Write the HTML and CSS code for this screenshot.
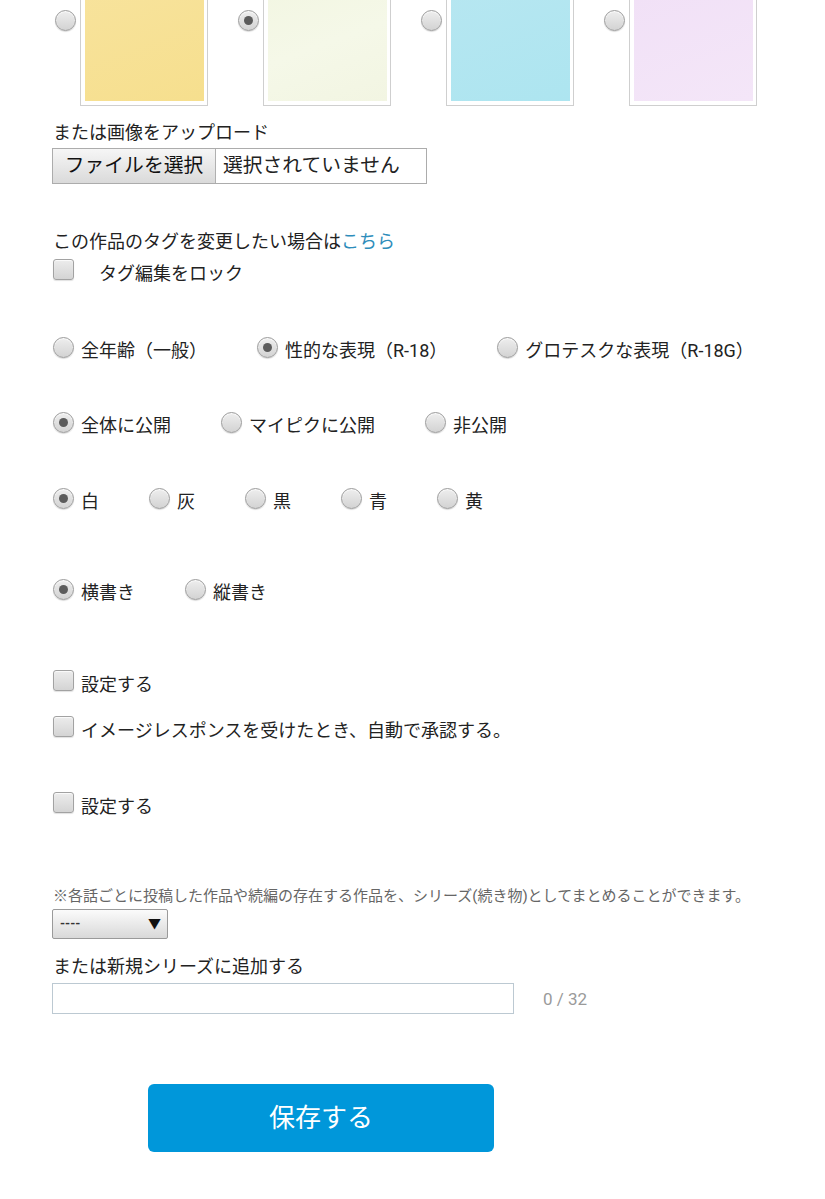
FILE: index.html
```html
<!DOCTYPE html>
<html lang="ja">
<head>
<meta charset="utf-8">
<link rel="stylesheet" href="styles.css">
</head>
<body>
<div class="page">
  <div class="thumbs">
    <div class="thumb-item"><span class="radio"></span><div class="thumb"><div class="fill fill-yellow"></div></div></div>
    <div class="thumb-item"><span class="radio on"></span><div class="thumb"><div class="fill fill-cream"></div></div></div>
    <div class="thumb-item"><span class="radio"></span><div class="thumb"><div class="fill fill-cyan"></div></div></div>
    <div class="thumb-item"><span class="radio"></span><div class="thumb"><div class="fill fill-lilac"></div></div></div>
  </div>

  <div class="line upload-label">または画像をアップロード</div>
  <div class="file-box">
    <div class="file-btn">ファイルを選択</div>
    <div class="file-status">選択されていません</div>
  </div>

  <div class="line tag-line">この作品のタグを変更したい場合は<a class="link" href="#">こちら</a></div>
  <div class="row tag-lock"><span class="check"></span><span class="label wide">タグ編集をロック</span></div>

  <div class="row radios rating">
    <div class="opt"><span class="radio"></span><span class="label">全年齢（一般）</span></div>
    <div class="opt"><span class="radio on"></span><span class="label">性的な表現（R-18）</span></div>
    <div class="opt"><span class="radio"></span><span class="label">グロテスクな表現（R-18G）</span></div>
  </div>

  <div class="row radios visibility">
    <div class="opt"><span class="radio on"></span><span class="label">全体に公開</span></div>
    <div class="opt"><span class="radio"></span><span class="label">マイピクに公開</span></div>
    <div class="opt"><span class="radio"></span><span class="label">非公開</span></div>
  </div>

  <div class="row radios colors">
    <div class="opt"><span class="radio on"></span><span class="label">白</span></div>
    <div class="opt"><span class="radio"></span><span class="label">灰</span></div>
    <div class="opt"><span class="radio"></span><span class="label">黒</span></div>
    <div class="opt"><span class="radio"></span><span class="label">青</span></div>
    <div class="opt"><span class="radio"></span><span class="label">黄</span></div>
  </div>

  <div class="row radios writing">
    <div class="opt"><span class="radio on"></span><span class="label">横書き</span></div>
    <div class="opt"><span class="radio"></span><span class="label">縦書き</span></div>
  </div>

  <div class="row cb1"><span class="check"></span><span class="label">設定する</span></div>
  <div class="row cb2"><span class="check"></span><span class="label">イメージレスポンスを受けたとき、自動で承認する。</span></div>
  <div class="row cb3"><span class="check"></span><span class="label">設定する</span></div>

  <div class="note">※各話ごとに投稿した作品や続編の存在する作品を、シリーズ(続き物)としてまとめることができます。</div>
  <div class="select"><span class="select-value">----</span><span class="select-arrow">▼</span></div>

  <div class="line series-label">または新規シリーズに追加する</div>
  <div class="series-row">
    <div class="text-input"></div>
    <span class="counter">0 / 32</span>
  </div>

  <div class="save-wrap"><div class="save-btn">保存する</div></div>
</div>
</body>
</html>
```
FILE: styles.css
```css
html, body {
  margin: 0;
  padding: 0;
  background: #ffffff;
}
body {
  font-family: Roboto, "Noto Sans CJK JP", sans-serif;
  font-size: 18px;
  line-height: 24px;
  color: #222222;
}
.page {
  display: flow-root;
  padding-left: 53px;
  padding-bottom: 40px;
}

/* thumbnails */
.thumbs {
  display: flex;
  gap: 30px;
  margin-top: -60px;
  padding-left: 2px;
}
.thumb-item {
  display: flex;
  align-items: flex-start;
  gap: 4px;
}
.thumb-item .radio {
  margin-top: 70px;
}
.thumb {
  width: 128px;
  height: 166px;
  box-sizing: border-box;
  border: 1px solid #cfcfcf;
  padding: 4px 3px 4px 4px;
  background: #ffffff;
}
.fill {
  width: 100%;
  height: 100%;
}
.fill-yellow { background: linear-gradient(160deg, #f8e4a0, #f6df8e); }
.fill-cream  { background: linear-gradient(160deg, #f1f5df, #f5f8e8 60%, #f2f5e2); }
.fill-cyan   { background: linear-gradient(160deg, #b9e7f1, #ade5f0); }
.fill-lilac  { background: linear-gradient(160deg, #f0dff6, #f4e6f8); }

/* radio & checkbox */
.radio {
  flex: none;
  width: 21px;
  height: 21px;
  box-sizing: border-box;
  border-radius: 50%;
  border: 1px solid #9c9c9c;
  background: linear-gradient(#eeeeee, #d3d3d3);
  box-shadow: inset 0 1px 1px rgba(255,255,255,0.8), 0 1px 1px rgba(0,0,0,0.15);
  display: flex;
  align-items: center;
  justify-content: center;
}
.radio.on::after {
  content: "";
  width: 9px;
  height: 9px;
  border-radius: 50%;
  background: #5b5b5b;
}
.check {
  flex: none;
  width: 21px;
  height: 21px;
  box-sizing: border-box;
  border-radius: 3px;
  border: 1px solid #a2a2a2;
  background: linear-gradient(#ececec, #d4d4d4);
  box-shadow: inset 0 1px 1px rgba(255,255,255,0.8), 0 1px 1px rgba(0,0,0,0.12);
}

.line {
  height: 24px;
  white-space: nowrap;
}
.row {
  display: flex;
  align-items: flex-start;
  height: 24px;
  white-space: nowrap;
}
.row .check { margin-top: -3px; }
.row .radio { margin-top: -2px; }
.label { margin-left: 7px; }
.label.wide { margin-left: 25px; }
.radios { gap: 50px; }
.opt {
  display: flex;
  align-items: flex-start;
}

/* upload */
.upload-label { margin-top: 15px; }
.file-box {
  margin: 3px 0 0 -1px;
  width: 375px;
  height: 36px;
  box-sizing: border-box;
  border: 1px solid #acacac;
  display: flex;
  font-size: 19.8px;
  line-height: 34px;
  background: #ffffff;
}
.file-btn {
  width: 163px;
  box-sizing: border-box;
  border-right: 1px solid #b0b0b0;
  background: linear-gradient(#f6f6f6, #dadada);
  text-align: center;
  color: #111111;
}
.file-status {
  padding-left: 7px;
  color: #222222;
}

.tag-line { margin-top: 46px; }
.link { color: #2e8dbb; text-decoration: none; }
.tag-lock { margin-top: 8px; }
.rating { margin-top: 53px; }
.visibility { margin-top: 51px; }
.colors { margin-top: 52px; }
.writing { margin-top: 67px; }
.cb1 { margin-top: 68px; }
.cb2 { margin-top: 22px; }
.cb3 { margin-top: 52px; }

/* series */
.note {
  margin-top: 67px;
  font-size: 15px;
  line-height: 20px;
  color: #666666;
  white-space: nowrap;
}
.select {
  margin: 3px 0 0 -1px;
  width: 116px;
  height: 30px;
  box-sizing: border-box;
  border: 1px solid #9a9a9a;
  border-radius: 2px;
  background: linear-gradient(#fbfbfb, #d9d9d9);
  display: flex;
  align-items: center;
  justify-content: space-between;
  padding: 0 6px 0 7px;
  font-size: 13px;
  color: #333333;
}
.select-value { font-weight: bold; }
.select-arrow { font-size: 13px; color: #111111; }

.series-label { margin-top: 16px; }
.series-row {
  margin: 4px 0 0 -1px;
  display: flex;
  align-items: center;
  gap: 29px;
}
.text-input {
  width: 462px;
  height: 31px;
  box-sizing: border-box;
  border: 1px solid #bcc9d2;
  background: #ffffff;
}
.counter {
  font-size: 17px;
  color: #9a9a9a;
}

.save-wrap {
  margin-top: 70px;
  padding-left: 95px;
}
.save-btn {
  width: 346px;
  height: 68px;
  border-radius: 6px;
  background: #0097da;
  color: #ffffff;
  font-size: 26px;
  line-height: 68px;
  text-align: center;
}
```
